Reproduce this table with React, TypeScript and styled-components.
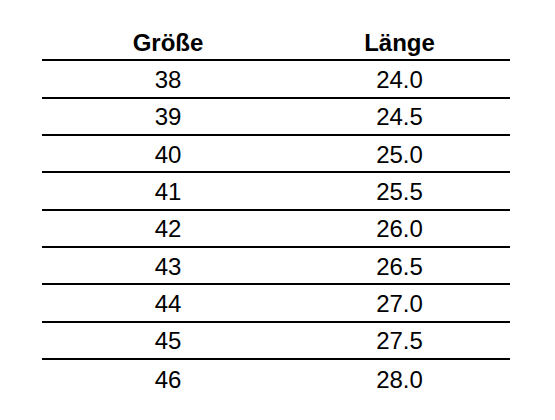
import React from "react"
import styled, { createGlobalStyle } from "styled-components"

const GlobalStyle = createGlobalStyle`
	html, body {
		margin: 0;
		padding: 0;
		background: #ffffff;
	}
	body {
		font-family: "Liberation Sans", Arial, sans-serif;
		color: #000000;
	}
`

const sizes: [string, string][] = [
	["38", "24.0"],
	["39", "24.5"],
	["40", "25.0"],
	["41", "25.5"],
	["42", "26.0"],
	["43", "26.5"],
	["44", "27.0"],
	["45", "27.5"],
	["46", "28.0"],
]

const Page = styled.div`
	width: 555px;
	height: 420px;
	padding: 24px 0 0 42px;
	box-sizing: border-box;
`

const Table = styled.div`
	width: 468px;
	display: flex;
	flex-direction: column;
`

const Row = styled.div<{ $ruled: boolean }>`
	display: grid;
	grid-template-columns: 252px 211px;
	height: 37.33px;
	box-sizing: border-box;
	border-bottom: ${(p) => (p.$ruled ? "2px solid #000" : "none")};
	align-items: center;
	padding-top: 2px;
`

const Cell = styled.div<{ $head?: boolean }>`
	text-align: center;
	font-size: 24px;
	font-weight: ${(p) => (p.$head ? 700 : 400)};
	line-height: 1;
`

const App: React.FC = () => {
	return (
		<>
			<GlobalStyle />
			<Page>
				<Table>
					<Row $ruled>
						<Cell $head>Größe</Cell>
						<Cell $head>Länge</Cell>
					</Row>
					{sizes.map(([size, length], i) => (
						<Row key={size} $ruled={i < sizes.length - 1}>
							<Cell>{size}</Cell>
							<Cell>{length}</Cell>
						</Row>
					))}
				</Table>
			</Page>
		</>
	)
}

export default App
